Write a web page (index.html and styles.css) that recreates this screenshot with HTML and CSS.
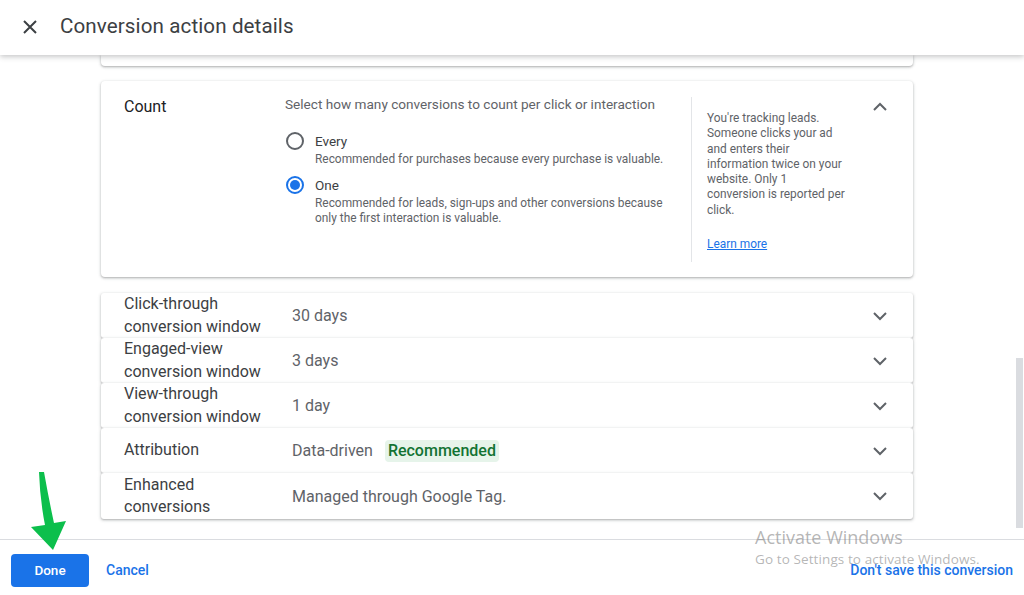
FILE: index.html
```html
<!DOCTYPE html>
<html lang="en">
<head>
<meta charset="utf-8">
<title>Conversion action details</title>
<link rel="stylesheet" href="styles.css">
</head>
<body>
<header class="topbar">
  <svg class="close-icon" width="24" height="24" viewBox="0 0 24 24"><path d="M6 6L18 18M18 6L6 18" stroke="#3c4043" stroke-width="2" fill="none"/></svg>
  <h1 class="title">Conversion action details</h1>
</header>
<main class="content">
  <div class="card stub"></div>
  <section class="card count">
    <div class="count-label">Count</div>
    <div class="count-options">
      <p class="count-desc">Select how many conversions to count per click or interaction</p>
      <div class="option">
        <svg class="radio" width="20" height="20" viewBox="0 0 20 20"><circle cx="10" cy="10" r="8" stroke="#5f6368" stroke-width="2" fill="none"/></svg>
        <div>
          <div class="option-name">Every</div>
          <div class="option-note">Recommended for purchases because every purchase is valuable.</div>
        </div>
      </div>
      <div class="option">
        <svg class="radio" width="20" height="20" viewBox="0 0 20 20"><circle cx="10" cy="10" r="8" stroke="#1a73e8" stroke-width="2" fill="none"/><circle cx="10" cy="10" r="5" fill="#1a73e8"/></svg>
        <div>
          <div class="option-name">One</div>
          <div class="option-note">Recommended for leads, sign-ups and other conversions because only the first interaction is valuable.</div>
        </div>
      </div>
    </div>
    <aside class="count-info">
      <p class="info-text">You're tracking leads. Someone clicks your ad and enters their information twice on your website. Only 1 conversion is reported per click.</p>
      <a class="learn-more" href="#">Learn more</a>
    </aside>
    <div class="chev-cell">
      <svg width="24" height="24" viewBox="0 0 24 24"><path d="M6 15l6-6 6 6" stroke="#5f6368" stroke-width="2" fill="none"/></svg>
    </div>
  </section>
  <div class="rows">
    <div class="card row">
      <div class="row-label">Click-through conversion window</div>
      <div class="row-value">30 days</div>
      <svg class="chev" width="24" height="24" viewBox="0 0 24 24"><path d="M6 9l6 6 6-6" stroke="#5f6368" stroke-width="2" fill="none"/></svg>
    </div>
    <div class="card row">
      <div class="row-label">Engaged-view conversion window</div>
      <div class="row-value">3 days</div>
      <svg class="chev" width="24" height="24" viewBox="0 0 24 24"><path d="M6 9l6 6 6-6" stroke="#5f6368" stroke-width="2" fill="none"/></svg>
    </div>
    <div class="card row">
      <div class="row-label">View-through conversion window</div>
      <div class="row-value">1 day</div>
      <svg class="chev" width="24" height="24" viewBox="0 0 24 24"><path d="M6 9l6 6 6-6" stroke="#5f6368" stroke-width="2" fill="none"/></svg>
    </div>
    <div class="card row">
      <div class="row-label">Attribution</div>
      <div class="row-value">Data-driven <span class="badge">Recommended</span></div>
      <svg class="chev" width="24" height="24" viewBox="0 0 24 24"><path d="M6 9l6 6 6-6" stroke="#5f6368" stroke-width="2" fill="none"/></svg>
    </div>
    <div class="card row last">
      <div class="row-label">Enhanced conversions</div>
      <div class="row-value">Managed through Google Tag.</div>
      <svg class="chev" width="24" height="24" viewBox="0 0 24 24"><path d="M6 9l6 6 6-6" stroke="#5f6368" stroke-width="2" fill="none"/></svg>
    </div>
  </div>
  <div class="scroll-thumb"></div>
</main>
<footer class="actions">
  <button class="btn-done">Done</button>
  <a class="link" href="#">Cancel</a>
  <a class="link right" href="#">Don't save this conversion</a>
</footer>
<div class="watermark">
  <div class="wm-title">Activate Windows</div>
  <div class="wm-sub">Go to Settings to activate Windows.</div>
</div>
<svg class="arrow" width="80" height="90" viewBox="0 0 80 90"><path d="M37 2 Q38 30 43 55 L29 57 L51 80 L64 51 L52 53 Q47 30 42 2 Z" fill="#0cbf4c"/></svg>
</body>
</html>
```
FILE: styles.css
```css
* { box-sizing: border-box; }
html, body { margin: 0; padding: 0; }
body {
  width: 1024px;
  height: 595px;
  overflow: hidden;
  display: flex;
  flex-direction: column;
  font-family: Roboto, "Liberation Sans", sans-serif;
  color: #3c4043;
  background: #fff;
  position: relative;
}
.topbar {
  height: 55px;
  flex: none;
  display: flex;
  align-items: center;
  padding: 0 0 4px 18px;
  gap: 18px;
  background: #fff;
  box-shadow: 0 2px 5px rgba(60,64,67,.28);
  position: relative;
  z-index: 2;
}
.close-icon { margin-top: 2px; }
.title {
  margin: 0;
  font-size: 20.6px;
  font-weight: 400;
  color: #3c4043;
  letter-spacing: 0.1px;
}
.content {
  flex: 1;
  position: relative;
  overflow: hidden;
  padding: 0 111px 0 101px;
}
.card {
  background: #fff;
  border-radius: 4px;
  box-shadow: 0 1px 2px rgba(60,64,67,.3), 0 1px 3px 1px rgba(60,64,67,.12);
}
.stub {
  height: 11px;
  border-radius: 0 0 4px 4px;
  margin-bottom: 15px;
}
.count {
  height: 196px;
  display: flex;
  margin-bottom: 16px;
}
.count-label {
  width: 184px;
  padding: 16px 0 0 23px;
  font-size: 16px;
  line-height: 20px;
  color: #202124;
}
.count-options {
  width: 406px;
  padding-top: 13px;
}
.count-desc {
  margin: 0 0 17px;
  font-size: 13.6px;
  line-height: 20px;
  color: #5f6368;
}
.option {
  display: flex;
  gap: 10px;
  margin-bottom: 8px;
}
.radio { flex: none; }
.option-name {
  font-size: 13.5px;
  line-height: 20px;
  color: #3c4043;
  margin-bottom: 1px;
}
.option-note {
  font-size: 11.9px;
  line-height: 15px;
  color: #5f6368;
  width: 362px;
}
.count-info {
  width: 166px;
  margin: 16px 0 15px;
  border-left: 1px solid #e3e5e8;
  padding: 14px 0 0 15px;
}
.info-text {
  margin: 0 0 15px;
  width: 139.5px;
  font-size: 11.9px;
  line-height: 15.3px;
  color: #5f6368;
}
.learn-more {
  font-size: 11.9px;
  line-height: 15px;
  color: #1a73e8;
  text-decoration: underline;
}
.chev-cell {
  flex: 1;
  display: flex;
  justify-content: flex-end;
  padding: 14px 21px 0 0;
}
.rows { display: flex; flex-direction: column; }
.row {
  height: 45px;
  display: flex;
  align-items: center;
  padding: 0 21px 0 23px;
  border-radius: 3px;
}
.row.last { height: 46px; }
.row-label {
  width: 168px;
  font-size: 16px;
  line-height: 22.5px;
  color: #3c4043;
  padding-right: 10px;
}
.row-value {
  flex: 1;
  font-size: 16px;
  color: #5f6368;
  display: flex;
  align-items: center;
}
.badge {
  margin-left: 12px;
  padding: 0 3px;
  height: 22px;
  line-height: 22px;
  background: #e6f4ea;
  color: #137333;
  border-radius: 4px;
  font-weight: 500;
}
.chev { flex: none; }
.scroll-thumb {
  position: absolute;
  right: 1px;
  top: 303px;
  width: 7px;
  height: 170px;
  background: #dadce0;
}
.actions {
  height: 56px;
  flex: none;
  border-top: 1px solid #dadce0;
  display: flex;
  align-items: flex-start;
  padding: 14px 11px 0;
}
.btn-done {
  width: 78px;
  height: 33px;
  border: none;
  border-radius: 4px;
  background: #1a73e8;
  color: #fff;
  font-family: Roboto, "Liberation Sans", sans-serif;
  font-size: 13.5px;
  font-weight: 500;
  padding: 0 0 2px;
}
.link {
  font-size: 14px;
  font-weight: 500;
  color: #1a73e8;
  text-decoration: none;
  line-height: 33px;
  margin-left: 17px;
}
.link.right { margin-left: auto; }
.watermark {
  position: absolute;
  left: 755px;
  top: 526px;
  color: rgba(120,120,120,.55);
  font-family: "Open Sans", "Noto Sans", sans-serif;
  pointer-events: none;
}
.wm-title { font-size: 18px; line-height: 23px; }
.wm-sub { font-size: 13.5px; line-height: 20px; letter-spacing: 0.1px; }
.arrow {
  position: absolute;
  left: 2px;
  top: 470px;
}
```
